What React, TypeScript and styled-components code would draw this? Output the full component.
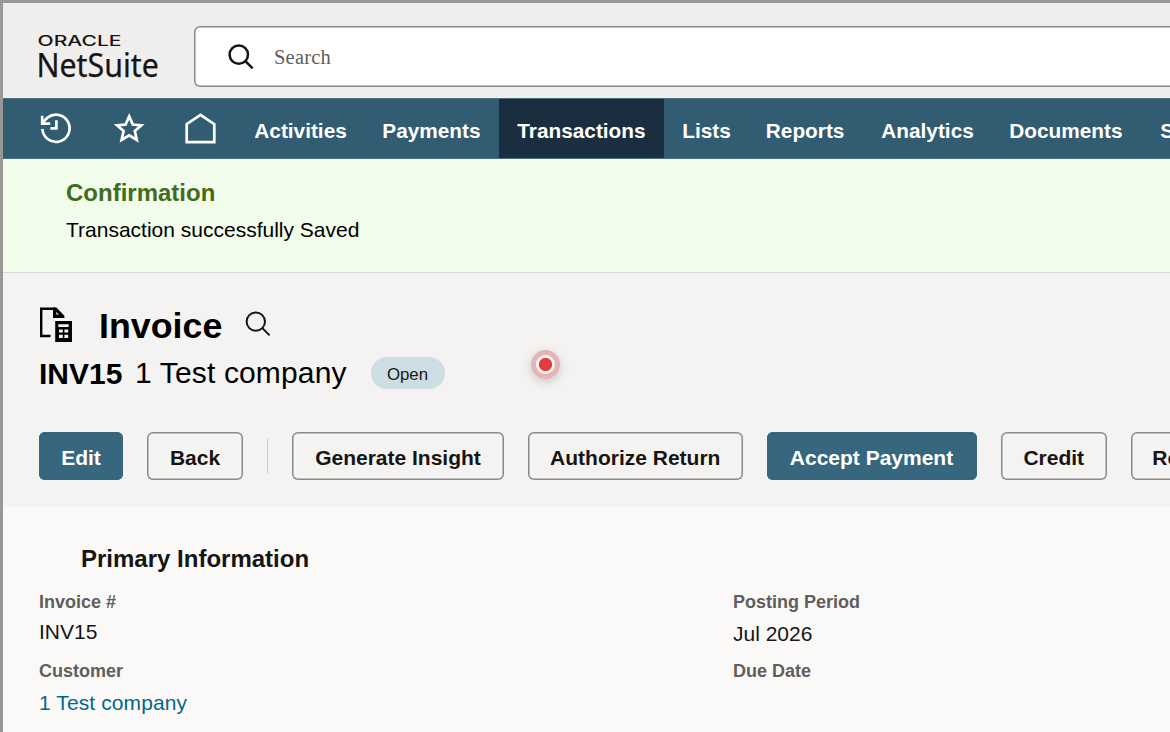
import React from "react";
import styled, { createGlobalStyle } from "styled-components";

const GlobalStyle = createGlobalStyle`
  * { box-sizing: border-box; }
  body { margin: 0; overflow: hidden; font-family: "Liberation Sans", Arial, sans-serif; }
  svg { display: block; flex: none; }
  h1, h2, p { margin: 0; }
`;

const Page = styled.div`
  position: relative;
  width: 1170px;
  height: 732px;
  overflow: hidden;
  display: flex;
  flex-direction: column;
  border-left: 3px solid #999896;
  border-top: 3px solid #999896;
  background: #faf9f7;
  color: #161513;
`;

const Header = styled.header`
  flex: none;
  height: 95px;
  display: flex;
  padding: 23px 0 0 33px;
  background: #efeeec;
`;

const SearchBox = styled.div`
  flex: none;
  margin-left: 30px;
  width: 1000px;
  height: 61px;
  display: flex;
  align-items: center;
  padding-left: 33.5px;
  border-radius: 6px;
  background: #fff;
  box-shadow: inset 0 0 0 1.5px #8b8a88;
`;

const SearchHint = styled.span`
  margin-left: 20.5px;
  font-family: "Liberation Serif", "Times New Roman", serif;
  font-size: 20.5px;
  line-height: 30px;
  letter-spacing: 0.2px;
  color: #5f5e5c;
`;

const Nav = styled.nav`
  flex: none;
  height: 60.5px;
  display: flex;
  background: #325c72;
  border-top: 1px solid #4a6f83;
  border-bottom: 1px solid #4a6f83;
`;

const NavIcons = styled.div`
  flex: none;
  width: 233px;
  padding: 12px 0 0 35px;
  display: flex;
  gap: 36.5px;
`;

const NavItem = styled.a<{ $width: number; $active?: boolean }>`
  flex: none;
  width: ${(p) => p.$width}px;
  padding: 4px 0 0 18.3px;
  font-size: 20.8px;
  font-weight: 700;
  line-height: 56px;
  white-space: nowrap;
  color: #fff;
  background: ${(p) => (p.$active ? "#1b2e40" : "transparent")};
`;

const Banner = styled.section`
  flex: none;
  height: 114.5px;
  padding: 19.5px 63px 0;
  background: #f2fcea;
  border-bottom: 1px solid #d9dad7;
`;

const BannerTitle = styled.h2`
  font-size: 24px;
  line-height: 30px;
  color: #436b1d;
`;

const BannerText = styled.p`
  margin-top: 7px;
  font-size: 21px;
  line-height: 30px;
  color: #000;
`;

const RecordHeader = styled.section`
  flex: none;
  height: 233.5px;
  padding: 32px 0 0 36px;
  background: #f4f3f1;
  color: #000;
`;

const TitleRow = styled.div`
  display: flex;
  height: 40px;
`;

const RecordTitle = styled.h1`
  margin: 0 22.5px 0 26px;
  padding-top: 1px;
  font-size: 35.8px;
  line-height: 40px;
`;

const SubtitleRow = styled.div`
  display: flex;
  margin-top: 8px;
  height: 40px;
  font-size: 30px;
  line-height: 40px;
  white-space: nowrap;
`;

const RecordNumber = styled.strong`
  width: 96px;
  padding-top: 1px;
`;

const Company = styled.span`
  width: 235.5px;
  letter-spacing: 0.15px;
`;

const StatusPill = styled.span`
  width: 74px;
  height: 32px;
  margin-top: 4px;
  padding-top: 3px;
  border-radius: 16px;
  background: #ccdde3;
  text-align: center;
  font-size: 16.8px;
  line-height: 30px;
  color: #161513;
`;

const ButtonRow = styled.div`
  display: flex;
  align-items: center;
  gap: 24px;
  margin-top: 39px;
`;

const Button = styled.button<{ $width: number; $primary?: boolean }>`
  flex: none;
  width: ${(p) => p.$width}px;
  height: 48px;
  padding: 3px 0 0;
  border: none;
  border-radius: 6px;
  box-shadow: inset 0 0 0 1.5px ${(p) => (p.$primary ? "#37677e" : "#8b8a88")};
  background: ${(p) => (p.$primary ? "#37677e" : "transparent")};
  color: ${(p) => (p.$primary ? "#fff" : "#161513")};
  font: 700 21px "Liberation Sans", Arial, sans-serif;
  white-space: nowrap;
`;

const Divider = styled.span`
  flex: none;
  width: 1px;
  height: 36px;
  background: #d0cfcd;
`;

const Details = styled.section`
  padding: 37.5px 36px 0;
`;

const DetailsTitle = styled.h2`
  padding-left: 42px;
  font-size: 24px;
  line-height: 30px;
`;

const Columns = styled.div`
  display: grid;
  grid-template-columns: 694px 1fr;
  margin-top: 16px;
`;

const Field = styled.div`
  height: 69px;
`;

const FieldLabel = styled.div`
  font-size: 18px;
  font-weight: 700;
  line-height: 24px;
  color: #5f5e5c;
`;

const FieldValue = styled.div<{ $gap: number; $link?: boolean }>`
  margin-top: ${(p) => p.$gap}px;
  font-size: 21px;
  line-height: 30px;
  letter-spacing: ${(p) => (p.$link ? "0.1px" : "0")};
  color: ${(p) => (p.$link ? "#00688c" : "#161513")};
`;

const RecordDot = styled.div`
  position: absolute;
  left: 528px;
  top: 346.5px;
  width: 29px;
  height: 29px;
  border-radius: 50%;
  border: 5px solid #e3b5b8;
  background: radial-gradient(circle, #e13c3e 0 6.2px, #fff3ed 7px);
  background-clip: padding-box;
  box-shadow: 0 3px 8px rgba(90, 80, 80, 0.25);
`;

const Logo = () => (
  <svg width="128" height="62" viewBox="0 0 128 62" fill="#161513">
    <text x="1.5" y="20" fontFamily="Inter, sans-serif" fontSize="14" fontWeight="500" textLength="84" lengthAdjust="spacingAndGlyphs">ORACLE</text>
    <text x=".4" y="50.7" fontFamily="Noto Sans, sans-serif" fontSize="32.5" stroke="#161513" strokeWidth=".25" textLength="122.4" lengthAdjust="spacingAndGlyphs">NetSuite</text>
  </svg>
);

const SearchIcon = ({ weight }: { weight: number }) => (
  <svg width="26" height="26" viewBox="0 0 26 26" fill="none" stroke="#161513" strokeWidth={weight}>
    <circle cx="10.8" cy="10.6" r="9.2" />
    <path d="M17.1 16.9 24.6 24.4" />
  </svg>
);

const HistoryIcon = () => (
  <svg width="36" height="36" viewBox="0 0 36 36" fill="none" stroke="#fff" strokeWidth="2.7">
    <path d="M4.4 18A13.6 13.6 0 1 0 9.6 6.6L4.8 11.2" />
    <path d="M4.2 4.8V12.7H12.2" />
    <path d="M18.4 9.2V17.4H12.4" />
    <path d="M3.6 13.2V7.4l5.4 5.8Z" fill="#fff" stroke="none" />
  </svg>
);

const StarIcon = () => (
  <svg width="36" height="36" viewBox="0 0 36 36" fill="none" stroke="#fff" strokeWidth="2.7">
    <path d="m18.2 5.4 3.6 8.1 8.6.8-6.6 5.8 2 8.8-7.6-4.6-7.6 4.6 2-8.8L6 14.3l8.6-.8Z" />
  </svg>
);

const HomeIcon = () => (
  <svg width="36" height="36" viewBox="0 0 36 36" fill="none" stroke="#fff" strokeWidth="2.7">
    <path d="M3.7 13.1 17.5 3.9 31.3 13.1v18H3.7Z" />
  </svg>
);

const InvoiceIcon = () => (
  <svg width="34" height="38" viewBox="0 0 34 38">
    <path d="M11.5 31H2.2V3.8h14" fill="none" stroke="#000" strokeWidth="2.4" />
    <path d="M14 2.6h3.4l8 8.2V13H14Z" fill="#000" />
    <path d="M17.3 7v2.6h2.6Z" fill="#f4f3f1" />
    <path d="M16.2 16H33V37H16.2Z" fill="#000" />
    <path d="M19.3 19.2h10.4v2.8H19.3ZM20 24.6h3.8v3H20ZM25.4 24.6h3.8v3h-3.8ZM20 29.8h3.8v3.2H20ZM25.4 29.8h3.8v3.2h-3.8Z" fill="#f4f3f1" />
  </svg>
);

const TitleSearch = styled.div`
  padding-top: 6px;
`;

const InvoiceMark = styled.div`
  width: 34px;
`;

const navItems = [
  { label: "Activities", width: 128 },
  { label: "Payments", width: 135 },
  { label: "Transactions", width: 165, active: true },
  { label: "Lists", width: 83.5 },
  { label: "Reports", width: 115.5 },
  { label: "Analytics", width: 128 },
  { label: "Documents", width: 151 },
  { label: "Setup", width: 100 },
];

export default function App() {
  return (
    <Page>
      <GlobalStyle />
      <Header>
        <Logo />
        <SearchBox>
          <SearchIcon weight={2.5} />
          <SearchHint>Search</SearchHint>
        </SearchBox>
      </Header>
      <Nav>
        <NavIcons>
          <HistoryIcon />
          <StarIcon />
          <HomeIcon />
        </NavIcons>
        {navItems.map((item) => (
          <NavItem key={item.label} $width={item.width} $active={item.active}>
            {item.label}
          </NavItem>
        ))}
      </Nav>
      <Banner>
        <BannerTitle>Confirmation</BannerTitle>
        <BannerText>Transaction successfully Saved</BannerText>
      </Banner>
      <RecordHeader>
        <TitleRow>
          <InvoiceMark>
            <InvoiceIcon />
          </InvoiceMark>
          <RecordTitle>Invoice</RecordTitle>
          <TitleSearch>
            <SearchIcon weight={2} />
          </TitleSearch>
        </TitleRow>
        <SubtitleRow>
          <RecordNumber>INV15</RecordNumber>
          <Company>1 Test company</Company>
          <StatusPill>Open</StatusPill>
        </SubtitleRow>
        <ButtonRow>
          <Button $width={84} $primary>Edit</Button>
          <Button $width={96}>Back</Button>
          <Divider />
          <Button $width={212}>Generate Insight</Button>
          <Button $width={214.5}>Authorize Return</Button>
          <Button $width={210} $primary>Accept Payment</Button>
          <Button $width={106.5}>Credit</Button>
          <Button $width={115}>Refund</Button>
        </ButtonRow>
      </RecordHeader>
      <Details>
        <DetailsTitle>Primary Information</DetailsTitle>
        <Columns>
          <Field>
            <FieldLabel>Invoice #</FieldLabel>
            <FieldValue $gap={3}>INV15</FieldValue>
          </Field>
          <Field>
            <FieldLabel>Posting Period</FieldLabel>
            <FieldValue $gap={5}>Jul 2026</FieldValue>
          </Field>
          <Field>
            <FieldLabel>Customer</FieldLabel>
            <FieldValue $gap={5} $link>1 Test company</FieldValue>
          </Field>
          <Field>
            <FieldLabel>Due Date</FieldLabel>
          </Field>
        </Columns>
      </Details>
      <RecordDot />
    </Page>
  );
}
